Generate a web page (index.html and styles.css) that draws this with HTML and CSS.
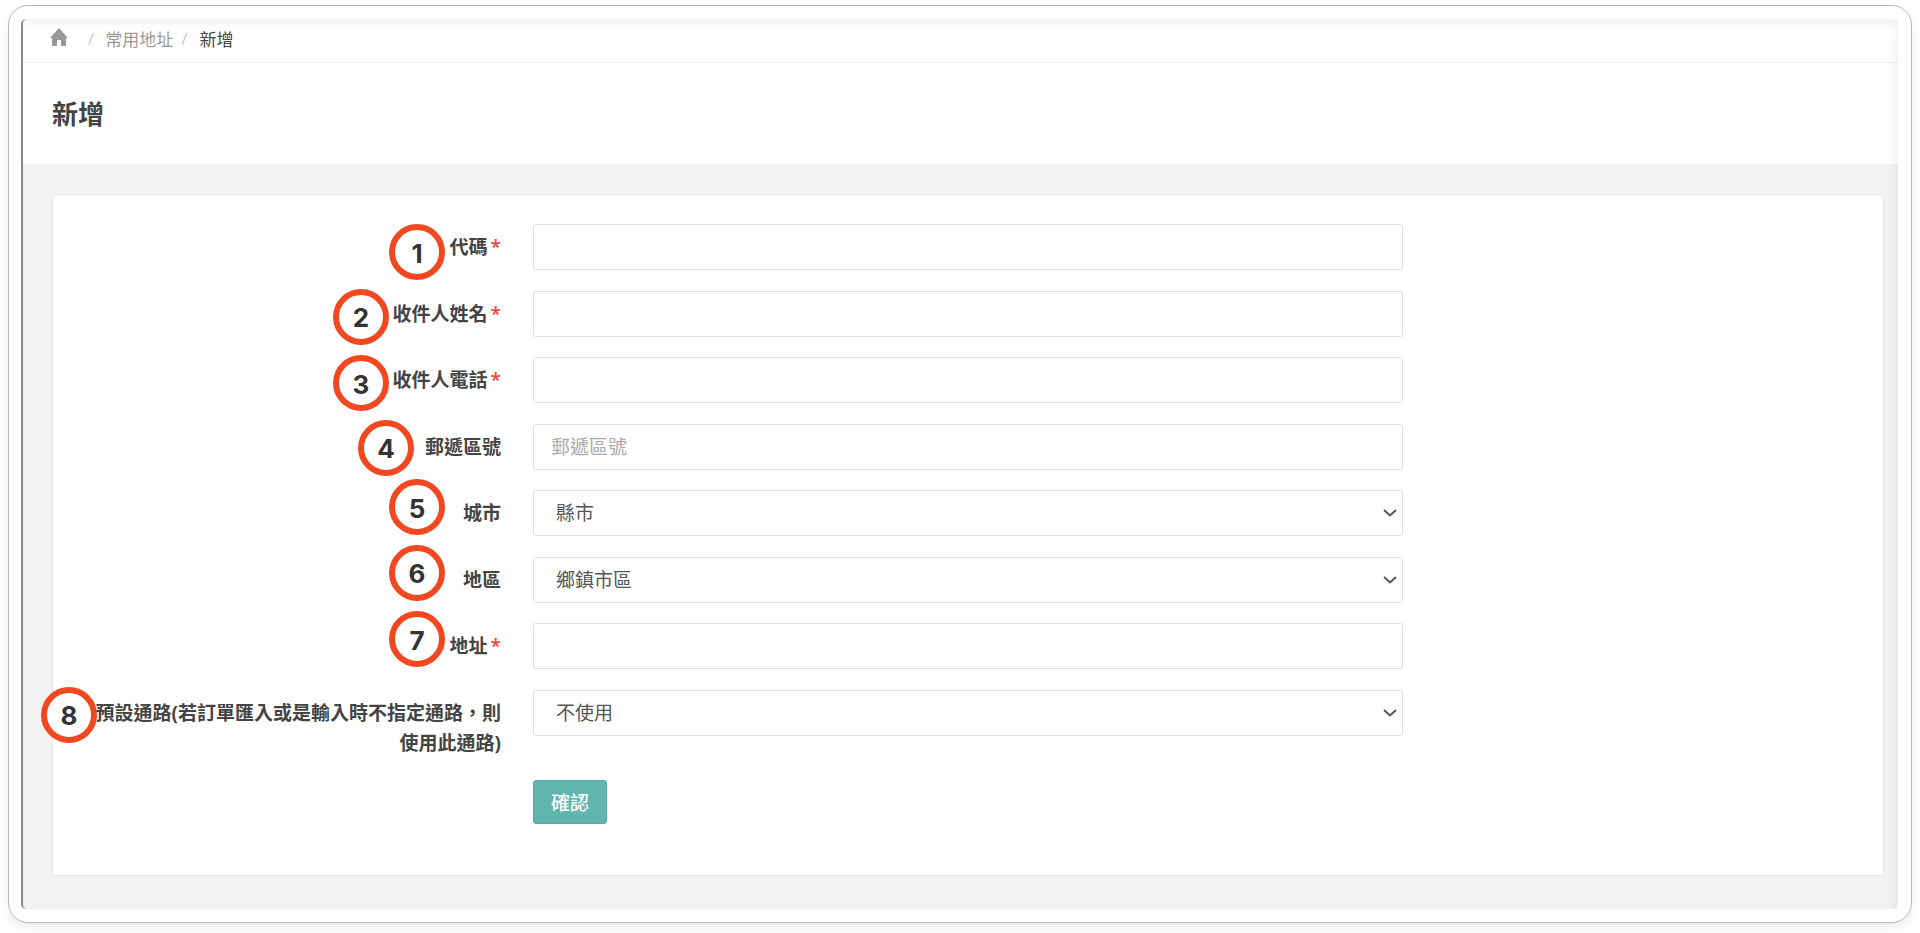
FILE: index.html
```html
<!DOCTYPE html>
<html lang="zh-Hant">
<head>
<meta charset="utf-8">
<meta name="viewport" content="width=device-width, initial-scale=1">
<title>新增</title>
<link rel="stylesheet" href="styles.css">
</head>
<body>
<div class="frame">
<div class="screen">
  <nav class="breadcrumb" aria-label="breadcrumb">
    <a class="home" href="#" aria-label="home"><svg viewBox="0 0 18 18" width="18" height="18"><path d="M9 0 0 10h2v8h5v-6h4v6h5v-8h2z" fill="currentColor"/></svg></a>
    <span class="slash">/</span>
    <a class="crumb" href="#">常用地址</a>
    <span class="slash">/</span>
    <span class="current">新增</span>
  </nav>
  <header class="heading"><h1>新增</h1></header>
  <main class="content">
    <form class="card">
      <div class="fields">
        <div class="row">
          <div class="label-cell"><label for="code">代碼<span class="required">*</span></label><span class="badge b1">1</span></div>
          <div class="control-cell"><input class="control" id="code" type="text"></div>
        </div>
        <div class="row">
          <div class="label-cell"><label for="name">收件人姓名<span class="required">*</span></label><span class="badge b2">2</span></div>
          <div class="control-cell"><input class="control" id="name" type="text"></div>
        </div>
        <div class="row">
          <div class="label-cell"><label for="phone">收件人電話<span class="required">*</span></label><span class="badge b3">3</span></div>
          <div class="control-cell"><input class="control" id="phone" type="text"></div>
        </div>
        <div class="row">
          <div class="label-cell"><label for="zip">郵遞區號</label><span class="badge b4">4</span></div>
          <div class="control-cell"><input class="control" id="zip" type="text" placeholder="郵遞區號"></div>
        </div>
        <div class="row">
          <div class="label-cell"><label for="city">城市</label><span class="badge b5">5</span></div>
          <div class="control-cell"><select class="control" id="city"><option>縣市</option></select><svg class="arrow" viewBox="0 0 14 8" width="14" height="8"><path d="M1 1l6 5.500L13 1"/></svg></div>
        </div>
        <div class="row">
          <div class="label-cell"><label for="district">地區</label><span class="badge b6">6</span></div>
          <div class="control-cell"><select class="control" id="district"><option>鄉鎮市區</option></select><svg class="arrow" viewBox="0 0 14 8" width="14" height="8"><path d="M1 1l6 5.500L13 1"/></svg></div>
        </div>
        <div class="row">
          <div class="label-cell"><label for="address">地址<span class="required">*</span></label><span class="badge b7">7</span></div>
          <div class="control-cell"><input class="control" id="address" type="text"></div>
        </div>
        <div class="row">
          <div class="label-cell"><label for="channel">預設通路(若訂單匯入或是輸入時不指定通路，則使用此通路)</label><span class="badge b8">8</span></div>
          <div class="control-cell"><select class="control" id="channel"><option>不使用</option></select><svg class="arrow" viewBox="0 0 14 8" width="14" height="8"><path d="M1 1l6 5.500L13 1"/></svg></div>
        </div>
      </div>
      <div class="row actions">
        <div class="control-cell"><button class="submit" type="submit">確認</button></div>
      </div>
    </form>
  </main>
</div>
</div>
</body>
</html>
```
FILE: styles.css
```css
* { box-sizing: border-box; }

body {
  margin: 0;
  padding: 5px 8px 10px;
  min-height: 100vh;
  display: flex;
  background: #fff;
  color: #444;
  font-family: "Open Sans", "Noto Sans CJK TC", sans-serif;
  font-size: 19px;
}

.frame {
  flex: 1;
  display: flex;
  padding: 13px 13px 13px 12px;
  border: 1px solid #b8b8b8;
  border-radius: 20px;
  background: #fff;
  box-shadow: 0 4px 10px rgba(0, 0, 0, .08);
}

.screen {
  position: relative;
  flex: 1;
  display: flex;
  flex-direction: column;
  border-left: 2px solid #848a8e;
  border-radius: 5px;
  background: #f2f2f2;
}

.screen::after {
  content: "";
  position: absolute;
  inset: 0;
  border-radius: 5px;
  pointer-events: none;
  box-shadow: inset -3px 4px 8px rgba(0, 0, 0, .06);
}

.breadcrumb {
  display: flex;
  align-items: center;
  height: 44px;
  padding: 0 27px 4px;
  border-bottom: 1px solid #ececec;
  border-radius: 5px 5px 0 0;
  background: #fff;
  font-size: 17px;
}

.breadcrumb a { color: #999; text-decoration: none; }
.home { display: flex; margin-right: 12px; padding-bottom: 4px; }
.slash { padding: 0 8px; color: #ccc; }
.crumb { margin-left: 3px; }
.current { margin-left: 4px; }

.heading {
  display: flex;
  align-items: center;
  height: 101px;
  padding: 0 29px 2px;
  background: #fff;
}

h1 { margin: 0; font-size: 26px; font-weight: 600; }

.content { flex: 1; padding: 30px 14px 32px 29px; }

.card {
  padding: 29px 13px 51px;
  border: 1px solid #e7e7e7;
  border-radius: 3px;
  background: #fff;
}

.fields {
  display: grid;
  grid-auto-rows: minmax(0, 1fr);
  height: 532px;
}

.row { display: grid; grid-template-columns: 1fr 2fr 1fr; align-items: start; }

.label-cell {
  position: relative;
  padding: 8px 16px 0;
  text-align: right;
  font-weight: 700;
  line-height: 30px;
}

.label-cell label { display: block; }
.required { margin-left: 3px; color: #f0433a; font-weight: 600; }
.control-cell { position: relative; padding: 0 16px; }

.control {
  display: block;
  width: 100%;
  height: 46px;
  padding: 0 17px;
  border: 1px solid #ddd;
  border-radius: 3px;
  background: #fff;
  color: #555;
  font: inherit;
  appearance: none;
}

.control::placeholder { color: #aaa; }
select.control { padding: 0 22px; }

.arrow {
  position: absolute;
  top: 19px;
  right: 22px;
  fill: none;
  stroke: #555;
  stroke-width: 2;
  pointer-events: none;
}

.badge {
  position: absolute;
  z-index: 1;
  display: flex;
  align-items: center;
  justify-content: center;
  width: 56px;
  height: 56px;
  padding-top: 2px;
  border: 6px solid #f24822;
  border-radius: 50%;
  background: #fff;
  color: #333;
  font: 700 26px "Inter", "Liberation Sans", sans-serif;
}

.b1 { top: 0; right: 72px; }
.b2 { top: -2px; right: 128px; }
.b3 { top: -2px; right: 128px; }
.b4 { top: -4px; right: 103px; }
.b5 { top: -11px; right: 72px; }
.b6 { top: -12px; right: 72px; }
.b7 { top: -12px; right: 72px; }
.b8 { top: -3px; right: 420px; }

.actions { margin-top: 24px; }
.actions .control-cell { grid-column: 2; }

.submit {
  display: block;
  height: 44px;
  padding: 0 17px;
  border: 1px solid #58aaa2;
  border-radius: 3px;
  background: #60b5ae;
  color: #fff;
  font: inherit;
  font-weight: 500;
}
```
